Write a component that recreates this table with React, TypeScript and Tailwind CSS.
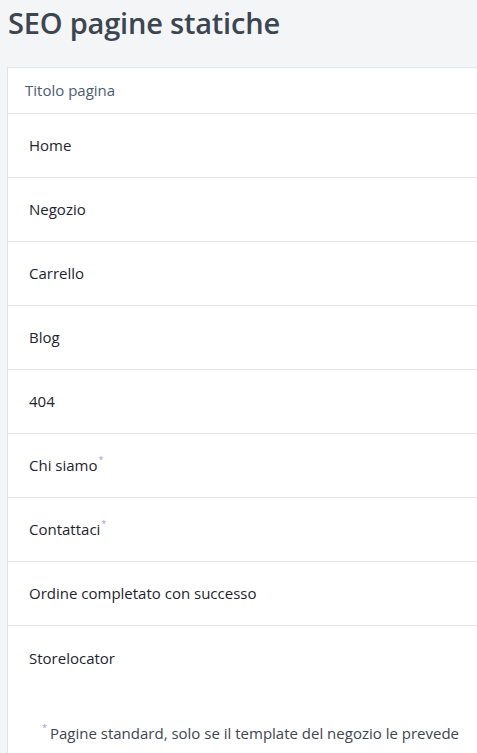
const rows: { label: string; star?: boolean }[] = [
  { label: 'Home' },
  { label: 'Negozio' },
  { label: 'Carrello' },
  { label: 'Blog' },
  { label: '404' },
  { label: 'Chi siamo', star: true },
  { label: 'Contattaci', star: true },
  { label: 'Ordine completato con successo' },
  { label: 'Storelocator' },
];

export default function App() {
  return (
    <div className="min-h-screen bg-[#f4f5f7] pl-[7px] font-['Open_Sans',sans-serif] overflow-hidden">
      <h1 className="pl-[1px] pt-[1px] h-[67px] text-[29px] font-semibold text-[#3c4651] tracking-[-0.2px]">
        SEO pagine statiche
      </h1>

      <div className="w-[600px] bg-white border border-[#e1e3e6]">
        {/* Table header */}
        <div className="h-[46px] flex items-center pl-[17px] text-[15px] text-[#4c5d70] border-b border-[#e1e3e6]">
          Titolo pagina
        </div>

        {rows.map((row, i) => (
          <div
            key={row.label}
            className={`h-[64px] flex items-center pl-[21px] text-[15px] text-[#1e2430] ${
              i < rows.length - 1 ? 'border-b border-[#e1e3e6]' : ''
            }`}
          >
            <span>
              {row.label}
              {row.star && <sup className="text-[9px] text-[#8fa3d8] ml-[1px] -top-[0.9em]">*</sup>}
            </span>
          </div>
        ))}

        <div className="pt-[32px] pb-[20px] pl-[34px] text-[15px] text-[#3e4652]">
          <sup className="text-[9px] text-[#8fa3d8] mr-[3px] -top-[0.9em]">*</sup>
          Pagine standard, solo se il template del negozio le prevede
        </div>
      </div>
    </div>
  );
}
